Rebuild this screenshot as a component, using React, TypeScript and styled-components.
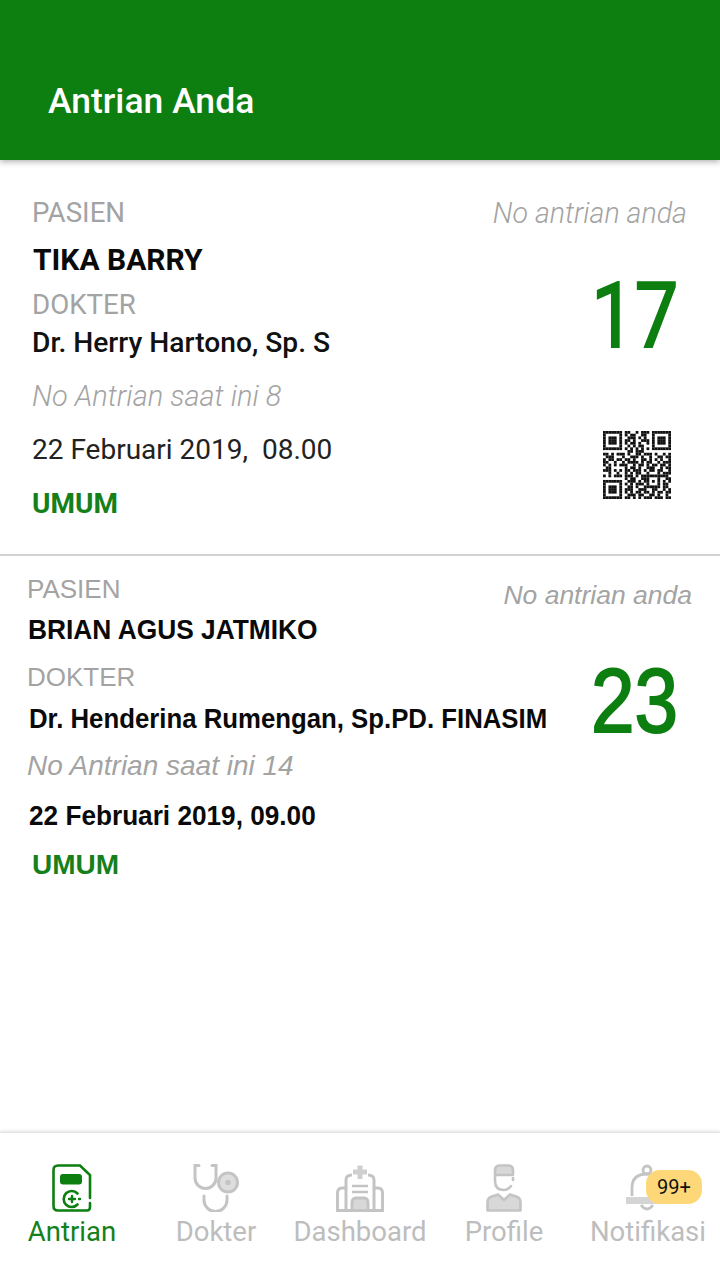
import styled, { createGlobalStyle } from "styled-components";

const GREEN = "#0d7e10";
const MUTED = "#a3a3a3";
const ICON_GREY = "#c4c4c4";
const ARIAL = `"Liberation Sans", Arial, sans-serif`;
const ROBOTO = `Roboto, "Liberation Sans", sans-serif`;

const GlobalStyle = createGlobalStyle`
  html, body {
    margin: 0;
    padding: 0;
    background: #fff;
  }
`;

const Screen = styled.div`
  width: 720px;
  height: 1280px;
  display: flex;
  flex-direction: column;
  overflow: hidden;
  background: #fff;
  font-family: ${ROBOTO};
`;

const Header = styled.header`
  height: 160px;
  flex: none;
  box-sizing: border-box;
  padding: 81px 0 0 48px;
  background: ${GREEN};
  box-shadow: 0 2px 6px rgba(0, 0, 0, 0.3);
  position: relative;
  z-index: 1;
`;

const Title = styled.h1`
  margin: 0;
  color: #fff;
  font-size: 35.5px;
  line-height: 40px;
  font-weight: 500;
`;

const List = styled.main`
  flex: 1;
`;

const TopCard = styled.section`
  height: 396px;
  box-sizing: border-box;
  padding: 35px 34px 0 32px;
  display: flex;
  justify-content: space-between;
  border-bottom: 2px solid #d2d2d2;
`;

const BottomCard = styled.section`
  padding: 15px 28px 0 27px;
  display: flex;
  justify-content: space-between;
`;

const Column = styled.div`
  flex: 1;
  min-width: 0;
  display: flex;
  flex-direction: column;
`;

const SideColumn = styled.div`
  display: flex;
  flex-direction: column;
  align-items: flex-end;
`;

const Label = styled.div<{ $top?: number; $arial?: boolean }>`
  margin-top: ${(p) => p.$top ?? 0}px;
  font-family: ${(p) => (p.$arial ? ARIAL : ROBOTO)};
  font-size: ${(p) => (p.$arial ? 26 : 27.7)}px;
  line-height: 36px;
  color: ${MUTED};
`;

const Name = styled.div<{ $top: number; $left?: number }>`
  margin: ${(p) => p.$top}px 0 0 ${(p) => p.$left ?? 0}px;
  font-size: 30px;
  line-height: 36px;
  font-weight: 700;
  color: #0a0a0a;
  white-space: nowrap;
`;

// the second card's bold lines are a squeezed Arial in the picture
const CondensedName = styled.div<{ $top: number; $left?: number; $size: number; $squeeze: number }>`
  margin: ${(p) => p.$top}px 0 0 ${(p) => p.$left ?? 0}px;
  font-family: ${ARIAL};
  font-size: ${(p) => p.$size}px;
  line-height: 36px;
  font-weight: 700;
  color: #0a0a0a;
  white-space: nowrap;
  transform: scaleX(${(p) => p.$squeeze});
  transform-origin: left center;
`;

const Doctor = styled.div`
  margin-top: 2px;
  font-size: 28.2px;
  line-height: 36px;
  font-weight: 500;
  color: #111;
  white-space: nowrap;
`;

const Current = styled.div<{ $top: number; $arial?: boolean }>`
  margin-top: ${(p) => p.$top}px;
  font-family: ${(p) => (p.$arial ? ARIAL : ROBOTO)};
  font-size: ${(p) => (p.$arial ? 28 : 29)}px;
  line-height: 36px;
  font-style: italic;
  font-weight: 300;
  color: ${MUTED};
  white-space: nowrap;
`;

const Schedule = styled.div`
  margin-top: 18px;
  font-size: 28px;
  line-height: 36px;
  color: #222;
  white-space: pre;
`;

const Service = styled.div<{ $top: number; $left?: number; $arial?: boolean }>`
  margin: ${(p) => p.$top}px 0 0 ${(p) => p.$left ?? 0}px;
  font-family: ${(p) => (p.$arial ? ARIAL : ROBOTO)};
  font-size: 28px;
  line-height: 36px;
  font-weight: 700;
  color: #15801a;
`;

const QueueCaption = styled.div<{ $top?: number; $arial?: boolean }>`
  margin: ${(p) => p.$top ?? 0}px ${(p) => (p.$arial ? 0 : -1)}px 0 0;
  font-family: ${(p) => (p.$arial ? ARIAL : ROBOTO)};
  font-size: ${(p) => (p.$arial ? 26.5 : 28.6)}px;
  line-height: 36px;
  font-style: italic;
  font-weight: 300;
  color: ${MUTED};
  white-space: nowrap;
`;

const QueueNumber = styled.div<{ $top: number; $right: number; $arial?: boolean; $squeeze: number }>`
  margin: ${(p) => p.$top}px ${(p) => p.$right}px 0 0;
  font-family: ${(p) => (p.$arial ? ARIAL : ROBOTO)};
  font-size: 90px;
  line-height: 90px;
  color: ${GREEN};
  -webkit-text-stroke: 2px ${GREEN};
  transform: scaleX(${(p) => p.$squeeze});
  transform-origin: right center;
`;

const QrBox = styled.div`
  margin: 69px 15px 0 0;
  width: 68px;
  height: 68px;
`;

const Tabs = styled.nav`
  height: 148px;
  flex: none;
  display: flex;
  box-sizing: border-box;
  padding-top: 31px;
  border-top: 1px solid #e6e6e6;
  box-shadow: 0 -1px 3px rgba(0, 0, 0, 0.12);
`;

const Tab = styled.div<{ $active?: boolean }>`
  flex: 1;
  display: flex;
  flex-direction: column;
  align-items: center;
  color: ${(p) => (p.$active ? "#15801a" : "#bdbdbd")};
`;

const IconSlot = styled.div`
  height: 48px;
  position: relative;
  display: flex;
  justify-content: center;
`;

const TabLabel = styled.span`
  margin-top: 3px;
  font-size: 27.5px;
  line-height: 34px;
  white-space: nowrap;
`;

const Badge = styled.span`
  position: absolute;
  left: 20px;
  top: 6px;
  width: 56px;
  height: 34px;
  border-radius: 14px;
  background: #fdd778;
  color: #111;
  font-size: 20px;
  line-height: 34px;
  text-align: center;
`;

const QR_ROWS = [
  "#######.##..#.###.#######",
  "#.....#.#.##..##..#.....#",
  "#.###.#..###.#.#..#.###.#",
  "#.###.#.##.#..###.#.###.#",
  "#.###.#.#.##.#..#.#.###.#",
  "#.....#..#.#.##...#.....#",
  "#######.#.#.#.#.#.#######",
  ".........##.###..........",
  "##.#.###.#..##.###.#..#.#",
  ".###...#..###.#..#..##.##",
  "#.##.##.##.#..##.#.#.#..#",
  "##..#..#.####.#.##..#.###",
  "#.#.#.###..#.##.#.##.##.#",
  ".##.....#.##.#..###..#.##",
  "###.#.#.##.###.#.##.##..#",
  "..#..#..#.#.##..#...#.###",
  "#.#.###.###.#.##########.",
  "........#.##..###...#..##",
  "#######..###.#.##.#.#.#.#",
  "#.....#.#.#.###.#...#.##.",
  "#.###.#..##.#..######.##.",
  "#.###.#.###..###..##..#.#",
  "#.###.#.#.#.##.##.#.##.##",
  "#.....#..###.##..##.#..#.",
  "#######.##.#.#.###.###.##",
];

function QrCode() {
  return (
    <svg width="68" height="68" viewBox="0 0 25 25" fill="#111">
      {QR_ROWS.flatMap((row, y) =>
        row.split("").map((cell, x) =>
          cell === "#" ? <rect key={`${x}-${y}`} x={x} y={y} width="1.02" height="1.02" /> : null
        )
      )}
    </svg>
  );
}

function QueueIcon() {
  return (
    <svg width="40" height="48" viewBox="0 0 40 48" fill="none" stroke={GREEN} strokeWidth="2.6" strokeLinecap="round">
      <path d="M38 34V11L28 1.5H6Q1.5 1.5 1.5 6V42Q1.5 46.5 6 46.5H35Q38 46.5 38 43V39" />
      <rect x="8" y="10" width="22" height="10.5" rx="3" fill={GREEN} stroke="none" />
      <path d="M25.5 29.5A8 8 0 1 0 25.5 40.5" />
      <path d="M20 32V38M17 35H23" strokeWidth="2.4" />
      <path d="M27 35H28" strokeWidth="2.4" />
    </svg>
  );
}

function DoctorIcon() {
  return (
    <svg width="46" height="48" viewBox="0 0 46 48" fill="none" stroke={ICON_GREY} strokeWidth="3" strokeLinecap="round">
      <path d="M6 1.5H2V14A10.5 10.5 0 0 0 23 14V1.5H19" />
      <path d="M11 32V36A11.5 11.5 0 0 0 34 36V32" />
      <circle cx="35" cy="18.5" r="9.5" fill="#dedede" />
      <circle cx="35" cy="18.5" r="2.8" fill={ICON_GREY} stroke="none" />
    </svg>
  );
}

function HospitalIcon() {
  return (
    <svg width="48" height="48" viewBox="0 0 48 48" fill="none" stroke={ICON_GREY} strokeWidth="3">
      <path d="M24 1.5V15M17 8H31" strokeWidth="5" stroke="#cfcfcf" />
      <path d="M10 46.5V16Q10 11 16 11M38 46.5V16Q38 11 32 11" />
      <path d="M10 24H6Q1.5 24 1.5 29V46.5H46.5V29Q46.5 24 42 24H38" />
      <path d="M16 22H32M16 28H32" strokeWidth="2.4" />
      <path d="M16 46.5V39Q16 34 20 34H28Q32 34 32 39V46.5Z" fill="#d8d8d8" />
    </svg>
  );
}

function ProfileIcon() {
  return (
    <svg width="36" height="48" viewBox="0 0 36 48" fill="none" stroke={ICON_GREY} strokeWidth="2.6" strokeLinecap="round" strokeLinejoin="round">
      <path d="M9 11V6Q9 1.5 14 1.5H22Q27 1.5 27 6V11Z" fill="#d8d8d8" />
      <path d="M9 12V17Q9 26 18 26Q22 26 25 22" />
      <path d="M27 14V16" />
      <path
        d="M1.5 46.5V38Q1.5 34 6 32.5L12 30.5L18 36L24 30.5L30 32.5Q34.5 34 34.5 38V46.5Z"
        fill="#d8d8d8"
      />
    </svg>
  );
}

function BellIcon() {
  return (
    <svg width="44" height="48" viewBox="0 0 44 48" fill="none" stroke={ICON_GREY} strokeWidth="2.8">
      <circle cx="21" cy="6" r="4" />
      <path d="M6 32V24Q6 10 21 10Q36 10 36 24V32" />
      <rect x="0" y="33" width="42" height="7" fill="#d4d4d4" stroke="none" />
      <path d="M15 41Q21 49 27 41" />
    </svg>
  );
}

export default function App() {
  return (
    <>
      <GlobalStyle />
      <Screen>
        <Header>
          <Title>Antrian Anda</Title>
        </Header>
        <List>
          <TopCard>
            <Column>
              <Label>PASIEN</Label>
              <Name $top={11} $left={1}>TIKA BARRY</Name>
              <Label $top={9}>DOKTER</Label>
              <Doctor>Dr. Herry Hartono, Sp. S</Doctor>
              <Current $top={17}>No Antrian saat ini 8</Current>
              <Schedule>22 Februari 2019,  08.00</Schedule>
              <Service $top={18}>UMUM</Service>
            </Column>
            <SideColumn>
              <QueueCaption>No antrian anda</QueueCaption>
              <QueueNumber $top={41} $right={8} $squeeze={0.86}>17</QueueNumber>
              <QrBox>
                <QrCode />
              </QrBox>
            </SideColumn>
          </TopCard>
          <BottomCard>
            <Column>
              <Label $arial>PASIEN</Label>
              <CondensedName $top={5} $left={1} $size={28} $squeeze={0.94}>BRIAN AGUS JATMIKO</CondensedName>
              <Label $top={11} $arial>DOKTER</Label>
              <CondensedName $top={6} $left={2} $size={28} $squeeze={0.92}>Dr. Henderina Rumengan, Sp.PD. FINASIM</CondensedName>
              <Current $top={11} $arial>No Antrian saat ini 14</Current>
              <CondensedName $top={14} $left={2} $size={28} $squeeze={0.935}>22 Februari 2019, 09.00</CondensedName>
              <Service $top={13} $left={5} $arial>UMUM</Service>
            </Column>
            <SideColumn>
              <QueueCaption $top={6} $arial>No antrian anda</QueueCaption>
              <QueueNumber $top={43} $right={14} $arial $squeeze={0.87}>23</QueueNumber>
            </SideColumn>
          </BottomCard>
        </List>
        <Tabs>
          <Tab $active>
            <IconSlot><QueueIcon /></IconSlot>
            <TabLabel>Antrian</TabLabel>
          </Tab>
          <Tab>
            <IconSlot><DoctorIcon /></IconSlot>
            <TabLabel>Dokter</TabLabel>
          </Tab>
          <Tab>
            <IconSlot><HospitalIcon /></IconSlot>
            <TabLabel>Dashboard</TabLabel>
          </Tab>
          <Tab>
            <IconSlot><ProfileIcon /></IconSlot>
            <TabLabel>Profile</TabLabel>
          </Tab>
          <Tab>
            <IconSlot>
              <BellIcon />
              <Badge>99+</Badge>
            </IconSlot>
            <TabLabel>Notifikasi</TabLabel>
          </Tab>
        </Tabs>
      </Screen>
    </>
  );
}
